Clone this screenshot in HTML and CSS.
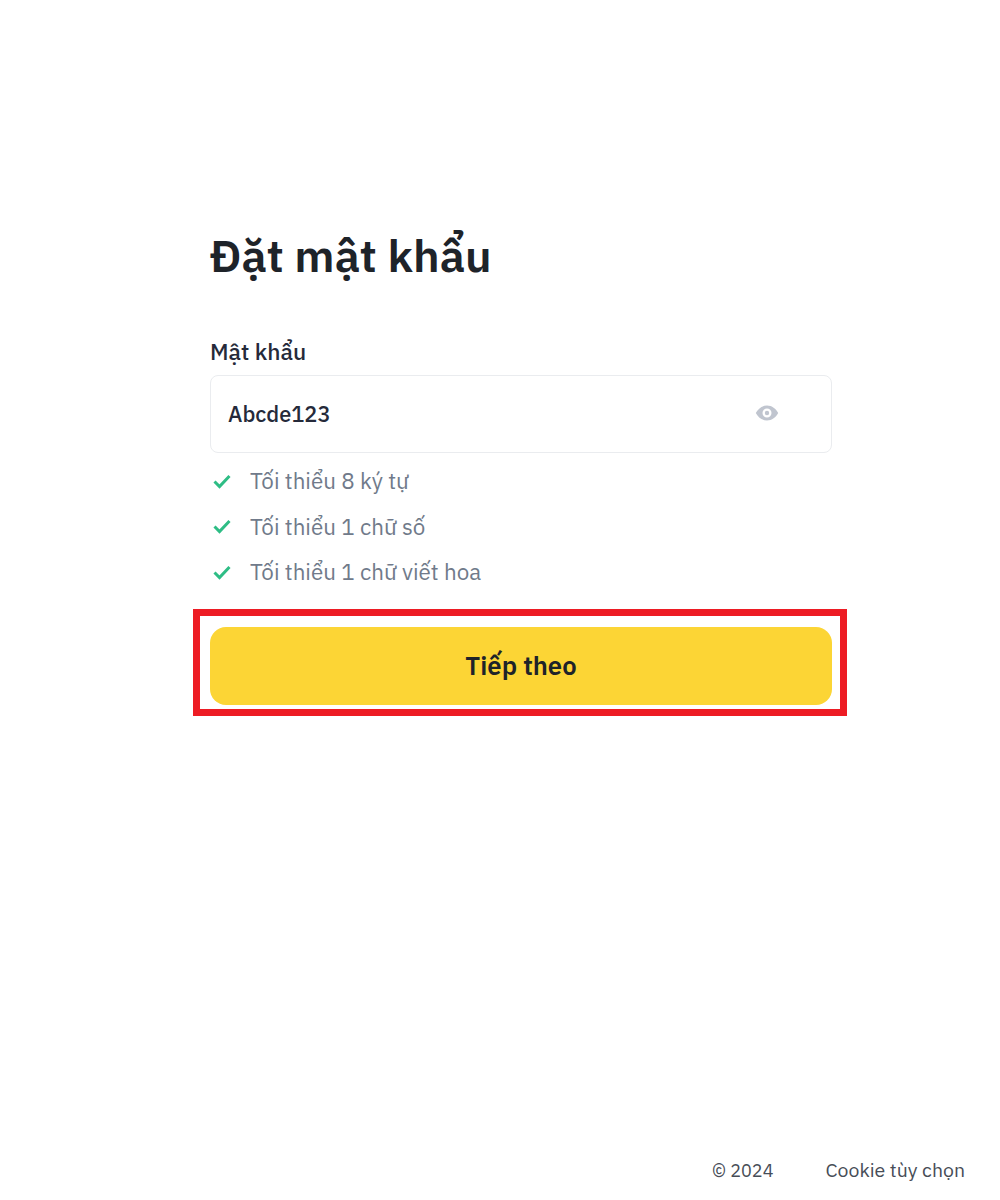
FILE: index.html
```html
<!DOCTYPE html>
<html lang="vi">
<head>
<meta charset="utf-8">
<title>Đặt mật khẩu</title>
<link rel="stylesheet" href="styles.css">
</head>
<body>
<div class="page">
  <main class="form">
    <h1 class="title">Đặt mật khẩu</h1>
    <label class="label">Mật khẩu</label>
    <div class="input">
      <span class="value">Abcde123</span>
      <svg class="eye" viewBox="0 0 24 24" width="24" height="24" aria-hidden="true"><path fill-rule="evenodd" d="M12 4.500C7 4.500 3 7.800.8 12c2.200 4.200 6.200 7.500 11.200 7.500s9-3.300 11.200-7.500C21 7.800 17 4.500 12 4.500zm0 3a4.500 4.500 0 1 1 0 9 4.500 4.500 0 0 1 0-9zm0 2.300a2.200 2.200 0 1 0 0 4.400 2.200 2.200 0 0 0 0-4.400z"/></svg>
    </div>
    <ul class="rules">
      <li class="rule"><svg class="check" viewBox="0 0 20 20" width="20" height="20" aria-hidden="true"><path d="M2.500 10.500l5 5 10-10.500" fill="none" stroke="currentColor" stroke-width="3"/></svg>Tối thiểu 8 ký tự</li>
      <li class="rule"><svg class="check" viewBox="0 0 20 20" width="20" height="20" aria-hidden="true"><path d="M2.500 10.500l5 5 10-10.500" fill="none" stroke="currentColor" stroke-width="3"/></svg>Tối thiểu 1 chữ số</li>
      <li class="rule"><svg class="check" viewBox="0 0 20 20" width="20" height="20" aria-hidden="true"><path d="M2.500 10.500l5 5 10-10.500" fill="none" stroke="currentColor" stroke-width="3"/></svg>Tối thiểu 1 chữ viết hoa</li>
    </ul>
    <div class="next-wrap"><button class="next">Tiếp theo</button></div>
  </main>
  <footer class="footer">
    <span class="copy">© 2024</span>
    <span class="cookie">Cookie tùy chọn</span>
  </footer>
</div>
</body>
</html>
```
FILE: styles.css
```css
* { box-sizing: border-box; }
html, body { margin: 0; padding: 0; background: #fff; }
body { font-family: "IBM Plex Sans", Roboto, "Noto Sans", sans-serif; color: #1e2329; }
.page { height: 1200px; display: flex; flex-direction: column; justify-content: space-between; overflow: hidden; }
.form { width: 622px; margin: 0 0 0 210px; padding-top: 228px; }
.title { margin: 0; font-size: 45.400px; line-height: 54px; font-weight: 600; }
.label { display: block; margin-top: 56px; font-size: 22.800px; line-height: 28px; font-weight: 500; color: #252a3a; }
.input { margin-top: 9px; height: 78px; border: 1px solid #eaecef; border-radius: 8px; display: flex; align-items: center; justify-content: space-between; padding: 0 52px 0 17px; }
.value { font-size: 21.800px; font-weight: 500; color: #252a3a; }
.eye { fill: #c0c5cf; display: block; margin-bottom: 2px; }
.rules { list-style: none; margin: 5px 0 0; padding: 0; }
.rule { display: flex; align-items: center; height: 45.500px; font-size: 22.400px; color: #707a8a; }
.check { color: #2ebd85; margin: 0 18px 0 2px; flex: none; }
.next-wrap { position: relative; margin-top: 32px; }
.next-wrap::after { content: ""; position: absolute; inset: -18px -15px -11px -17px; border: 7px solid #ed1c24; pointer-events: none; }
.next { display: block; width: 100%; height: 78px; margin: 0; border: 0; border-radius: 16px; background: #fcd535; color: #1e2329; font: 600 25.700px "IBM Plex Sans", Roboto, "Noto Sans", sans-serif; }
.footer { display: flex; justify-content: flex-end; align-items: baseline; gap: 52px; padding: 0 35px 17px 0; line-height: 24px; color: #474d57; }
.copy { font-size: 18px; }
.cookie { font-size: 19.500px; }
```
